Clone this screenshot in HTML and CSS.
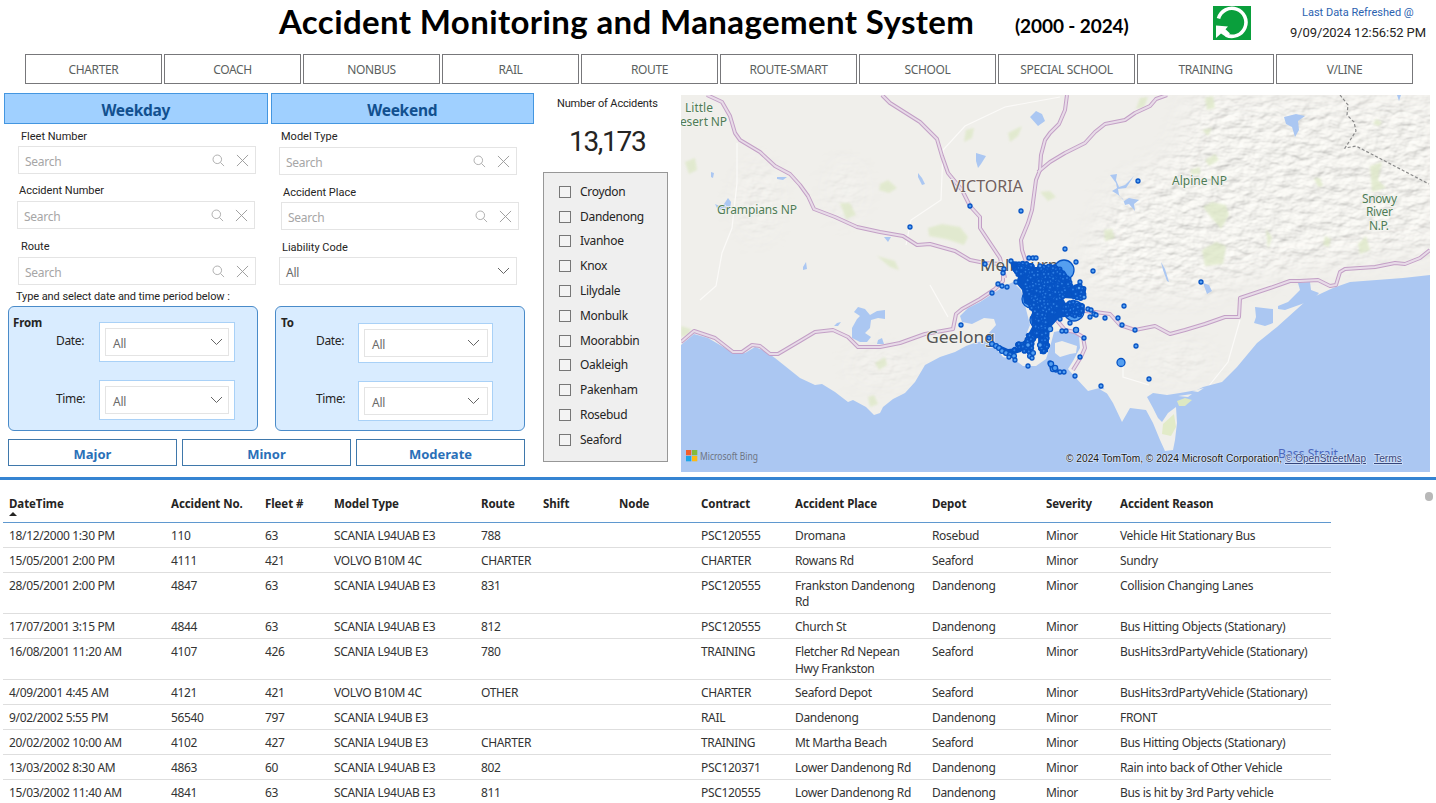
FILE: index.html
```html
<!DOCTYPE html>
<html lang="en">
<head>
<meta charset="utf-8">
<title>Accident Monitoring and Management System</title>
<link rel="stylesheet" href="styles.css">
</head>
<body>
<svg class="defs" width="0" height="0" aria-hidden="true">
  <symbol id="search" viewBox="0 0 14 14"><circle cx="5.7" cy="5.7" r="4.6"/><path d="M9 9l4 4"/></symbol>
  <symbol id="clear" viewBox="0 0 14 14"><path d="M1 1l12 12M13 1L1 13"/></symbol>
  <symbol id="chevron" viewBox="0 0 12 8"><path d="M.5 1L6 6.5 11.500 1"/></symbol>
</svg>
<header class="header">
  <h1 class="title">Accident Monitoring and Management System</h1>
  <span class="years">(2000 - 2024)</span>
  <svg class="refresh" viewBox="0 0 38 34"><rect width="38" height="34" fill="#0a9f3c"/><path d="M5.500 12.500A14 14 0 1 1 13 29" fill="none" stroke="#fff" stroke-width="3.600"/><path d="M3 19.500L15 20.500 12.500 23.200 17 27.500 12.500 30.500 8 27.500 3 32z" fill="#fff"/></svg>
  <div class="refreshed"><span class="refreshed-label">Last Data Refreshed @</span><span class="refreshed-time">9/09/2024 12:56:52 PM</span></div>
</header>
<nav class="tabs">
  <button>CHARTER</button><button>COACH</button><button>NONBUS</button><button>RAIL</button><button>ROUTE</button><button>ROUTE-SMART</button><button>SCHOOL</button><button>SPECIAL SCHOOL</button><button>TRAINING</button><button>V/LINE</button>
</nav>
<main class="body">
  <section class="filters">
    <div class="days"><button>Weekday</button><button>Weekend</button></div>
    <div class="fields">
      <div class="fields-col">
        <div class="field f1"><label>Fleet Number</label><div class="box"><span>Search</span><svg class="ic"><use href="#search"/></svg><svg class="ic x"><use href="#clear"/></svg></div></div>
        <div class="field f2"><label>Accident Number</label><div class="box"><span>Search</span><svg class="ic"><use href="#search"/></svg><svg class="ic x"><use href="#clear"/></svg></div></div>
        <div class="field f3"><label>Route</label><div class="box"><span>Search</span><svg class="ic"><use href="#search"/></svg><svg class="ic x"><use href="#clear"/></svg></div></div>
      </div>
      <div class="fields-col">
        <div class="field g1"><label>Model Type</label><div class="box"><span>Search</span><svg class="ic"><use href="#search"/></svg><svg class="ic x"><use href="#clear"/></svg></div></div>
        <div class="field g2"><label>Accident Place</label><div class="box"><span>Search</span><svg class="ic"><use href="#search"/></svg><svg class="ic x"><use href="#clear"/></svg></div></div>
        <div class="field g3"><label>Liability Code</label><div class="box all"><span>All</span><svg class="chev"><use href="#chevron"/></svg></div></div>
      </div>
    </div>
    <p class="hint">Type and select date and time period below :</p>
    <div class="periods">
      <div class="period from"><b>From</b>
        <div class="prow"><span>Date:</span><div class="sel"><div class="box all"><span>All</span><svg class="chev"><use href="#chevron"/></svg></div></div></div>
        <div class="prow"><span>Time:</span><div class="sel"><div class="box all"><span>All</span><svg class="chev"><use href="#chevron"/></svg></div></div></div>
      </div>
      <div class="period to"><b>To</b>
        <div class="prow"><span>Date:</span><div class="sel"><div class="box all"><span>All</span><svg class="chev"><use href="#chevron"/></svg></div></div></div>
        <div class="prow"><span>Time:</span><div class="sel"><div class="box all"><span>All</span><svg class="chev"><use href="#chevron"/></svg></div></div></div>
      </div>
    </div>
    <div class="severity"><button>Major</button><button>Minor</button><button>Moderate</button></div>
  </section>
  <section class="summary">
    <div class="kpi-label">Number of Accidents</div>
    <div class="kpi">13,173</div>
    <ul class="depots">
      <li><i></i>Croydon</li><li><i></i>Dandenong</li><li><i></i>Ivanhoe</li><li><i></i>Knox</li><li><i></i>Lilydale</li><li><i></i>Monbulk</li><li><i></i>Moorabbin</li><li><i></i>Oakleigh</li><li><i></i>Pakenham</li><li><i></i>Rosebud</li><li><i></i>Seaford</li>
    </ul>
  </section>
  <svg class="map" viewBox="681 95 749 377">
    <defs>
      <filter id="relief" x="0" y="0" width="1" height="1">
        <feTurbulence type="fractalNoise" baseFrequency="0.065 0.11" numOctaves="3" seed="8"/>
        <feDiffuseLighting surfaceScale="2.100" diffuseConstant="1.160" lighting-color="#f2f1ed"><feDistantLight azimuth="235" elevation="60"/></feDiffuseLighting>
      </filter>
      <filter id="soft"><feGaussianBlur stdDeviation="14"/></filter>
      <filter id="edge"><feGaussianBlur stdDeviation="1.300"/></filter>
      <mask id="hills">
        <g fill="#fff" filter="url(#soft)">
          <path d="M1195 95H1450V245L1330 262 1250 275 1190 295 1100 290 1088 262 1110 200 1180 150z" opacity=".8"/>
          <ellipse cx="1180" cy="362" rx="34" ry="12" opacity=".5"/>
          <ellipse cx="884" cy="367" rx="34" ry="12" opacity=".5"/>
          <ellipse cx="757" cy="200" rx="16" ry="36" opacity=".5"/>
          <ellipse cx="846" cy="190" rx="14" ry="28" opacity=".4"/>
        </g>
      </mask>
    </defs>
    <rect x="681" y="95" width="749" height="377" fill="#f0efeb"/>
    <rect x="681" y="95" width="749" height="377" filter="url(#relief)" mask="url(#hills)"/>
    <g class="park" filter="url(#edge)">
      <path d="M685 162l10-4 2 12-8 4zM880 184l8-4 9 8-8 5-10-3zM840 203l10 0 6 12-10 4zM928 228l14-4 18 3 8 10-4 8-18-6-17-3zM966 130l8-2-2 10-8 4zM1008 133l14-7-4 10-8 6zM877 256l18 5 4 9-9-3zM1040 192l10-1 6 6-8 4zM1205 98l8-2 2 12-8 2zM1205 160l10-6 4 6-10 6zM1190 170l10-3 0 7-8 1zM1202 130l10-2-4 8zM1212 202l14 3 3 10-8 14-10-12-8-10zM1202 250l14-8 10 4-3 18-18 2zM1104 230l8-1 3 9-10 3zM1314 178l6 0 3 8-5 1zM1370 166l12-4-4 18 8 8-14 4zM1358 244l8-8 4 14-10 4zM1325 236l6 3-2 8-6-2zM1140 98l8-1-4 10-8 2zM875 363l10-6 2 8-8 5zM868 397l6-2 4 9-8 3zM681 326l10 3-2 6-8 2zM1266 229l6 8-4 12zM1376 119l6 3-3 4-6-2z"/>
    </g>
    <g class="minor">
      <path d="M737 143l0 40-5 45-10 25-6 33-16 14M1060 97l-55 10-40 19-22 24-2 50-30 20-5 25M1240 320l-12 42-20 25M1123 365l0 12 26 8M930 285l18 32"/>
    </g>
    <g class="water">
      <path d="M681 345L694 334 708 338 720 345 735 354 745 353 755 347 765 351 775 358 800 378 815 385 822 384 835 392 848 402 853 400 866 407 874 415 880 413 883 407 893 399 905 393 915 382 925 365 940 357 955 352 966 346 977 342 988 341 988 334 996 325 994 319 984 318 972 324 962 322 960 316 968 308 980 302 1003 287 1013 282 1021 290 1025 305 1030 325 1022 345 1008 352 1000 350 995 347 1003 357 1015 360 1023 366 1036 366 1046 359 1050 347 1054 332 1068 329 1079 336 1080 348 1073 361 1068 369 1075 377 1088 391 1103 387 1113 403 1122 422 1130 408 1146 410 1153 423 1160 440 1165 451 1173 450 1175 440 1177 423 1176 407 1168 413 1162 422 1158 418 1153 408 1147 397 1153 393 1167 395 1180 393 1197 390 1203 387 1222 382 1237 367 1257 343 1277 327 1307 300 1333 288 1350 282 1403 278 1430 275V472H681z"/>
      <path d="M858 307l7 2 5 6 7-4 8-1v9l-7-1-7 2-1 8-5 5 6 4-4 5-7 0-8-4 0-10 5-9 3-3-6-4zM878 340l4-2 2 6-7 0zM834 326l3-3 4-1-3 4zM1255 307l18 2 0 14-8 3-11-3 2-6zM1278 306l10-4 12-12-2-7 12-1 1 8 8 3-6 7-28 10-7-1zM1030 117l6-6 6 3 3 7-7 5zM976 153l10 3-5 8-3 4-2-7zM918 173l4 5 3 6-3 1-4-8zM777 177l10 0-4 3-6-1zM884 237l7 0-3 5zM803 267l3-5 1 7-4 1zM711 172l3 1-1 5-2-1zM715 204l7 3 6-9 3 4-1 7-7 2-6-3zM1284 117l12-3 9 2-7 5 1 9-4 7-3-10-6-3zM1110 175l7-1-1 6 3 7 6-2 9-9-8 12-8 1 1 6 5 6 5-3 10 2-5 4 1 7-6-7-4 1-2-6-6-5-5-3 5-3-1-5zM1161 262l4 7 4 13-2-1-4-11zM1203 283l6 2 3 6-5 3zM1397 95l4 0-2 6z"/>
    </g>
    <g fill="#f0efeb"><path d="M1055 343l7-2 15 5-1 7-6 1-10 3-5-4zM1022 365l10-2-4 4zM1100 389q10-1 12 8l-4-3-7-4z"/><path d="M1177 401l8-3 7 2-7 6-6 0z" fill="#dde8c2"/><path d="M1178 396l14-2-4 3zM1192 391l12-3-6 4z"/></g>
    <path d="M1163 424l11-10 2 13-5 9-9-2z" fill="#e2ebc8"/>
    <g id="roads"></g>
    <path class="border" d="M1340 95l8 10-1 10 7 7 2 9-9 14-2 3 11-2 73 38"/>
    <g class="place">
      <g class="np"><text x="685" y="112" textLength="28">Little</text><text x="680" y="126" textLength="47">esert NP</text><text x="717" y="214" textLength="80">Grampians NP</text><text x="1172" y="185" textLength="55">Alpine NP</text><text x="1362" y="203" textLength="35">Snowy</text><text x="1366" y="216" textLength="27">River</text><text x="1369" y="230" textLength="20">N.P.</text></g>
      <text class="state" x="951" y="192" textLength="72" lengthAdjust="spacingAndGlyphs">VICTORIA</text>
      <text class="city" x="980" y="271" textLength="88" lengthAdjust="spacingAndGlyphs">Melbourne</text>
      <text class="city" x="926" y="343" textLength="69" lengthAdjust="spacingAndGlyphs">Geelong</text>
      <text class="strait" x="1278" y="458" textLength="60" lengthAdjust="spacingAndGlyphs">Bass Strait</text>
    </g>
    <g id="dots"></g>
    <g><path fill="#f25f2c" d="M686 450h5.300v5.300H686z"/><path fill="#84bb3d" d="M692 450h5.300v5.300H692z"/><path fill="#1da6e8" d="M686 456h5.300v5.300H686z"/><path fill="#fcb913" d="M692 456h5.300v5.300H692z"/></g>
    <text class="bing" x="700" y="460" textLength="58" lengthAdjust="spacingAndGlyphs">Microsoft Bing</text>
    <g class="credit"><text x="1066" y="462" textLength="216" lengthAdjust="spacingAndGlyphs">© 2024 TomTom, © 2024 Microsoft Corporation,</text><text class="link" x="1285" y="462" textLength="81" lengthAdjust="spacingAndGlyphs">© OpenStreetMap</text><text class="link" x="1374" y="462" textLength="28" lengthAdjust="spacingAndGlyphs">Terms</text></g>
  </svg>
</main>
<section class="report">
  <div class="table" id="table"></div>
  <div class="scroll"><i></i></div>
</section>
<script src="app.js"></script>
</body>
</html>
```
FILE: styles.css
```css
* { box-sizing: border-box; }
body { margin: 0; width: 1436px; height: 803px; overflow: hidden; background: #fff; font-family: "Noto Sans", "Open Sans", sans-serif; font-size: 12px; color: #252423; }
button { font: inherit; padding: 0; margin: 0; background: #fff; border-radius: 0; }
.defs { display: block; height: 0; }

.header { display: flex; height: 54px; padding-left: 279px; }
.title { margin: 0; width: 736px; font: 700 33px/42px Lato, sans-serif; letter-spacing: 0.38px; color: #000; white-space: nowrap; }
.years { width: 198px; font: 700 19px/51px Lato, sans-serif; letter-spacing: -0.1px; color: #000; white-space: nowrap; }
.refresh { width: 38px; height: 34px; margin-top: 6px; }
.refreshed { display: flex; flex-direction: column; width: 176px; padding-top: 5px; padding-left: 37px; font-family: Roboto, sans-serif; white-space: nowrap; }
.refreshed-label { padding-left: 14px; font-size: 11px; line-height: 15px; letter-spacing: 0; color: #2b62b0; }
.refreshed-time { padding-left: 2px; font-size: 13px; line-height: 25px; letter-spacing: -0.1px; }

.tabs { display: grid; grid-template-columns: repeat(10, 1fr); gap: 2px; width: 1413px; height: 30px; padding-left: 25px; }
.tabs button { height: 30px; padding-top: 1px; border: 1.500px solid #77777a; font-size: 12px; letter-spacing: -0.35px; color: #5b5f60; }

.body { display: flex; height: 388px; padding-top: 9px; }
.filters { width: 543px; }
.days { display: flex; gap: 3px; margin-left: 4px; }
.days button { width: 263.500px; height: 31px; padding-top: 3px; border: 1px solid #4496e0; background: #a0d0ff; font-size: 15.500px; font-weight: 700; color: #12508f; letter-spacing: -0.3px; }
.fields { display: flex; height: 164px; }
.fields-col { width: 262px; padding-top: 4px; }
.field label { display: block; height: 18px; padding-left: 3px; font: 11px/18px Roboto, sans-serif; letter-spacing: 0; }
.f1 { margin-left: 18px; }
.f2 { margin: 8px 0 0 17px; }
.field.f2 label { padding-left: 2px; height: 19px; }
.f3 { margin: 9px 0 0 18px; }
.field.f3 label { height: 19px; }
.g1 { margin-left: 17px; }
.field.g1 label { height: 19px; padding-left: 2px; }
.g2 { margin: 9px 0 0 19px; }
.field.g2 label { padding-left: 2px; }
.g3 { margin: 9px 0 0 17px; }
.box { display: flex; align-items: center; width: 238px; height: 28px; padding: 0 6px; border: 1px solid #e4e4e4; background: #fff; font-size: 12px; letter-spacing: -0.25px; color: #a6a6a6; }
.box span { flex: 1; padding-top: 4px; line-height: 20px; }
.box.all { color: #6b6b6b; }
.ic { width: 13px; height: 13px; fill: none; stroke: #aaa; stroke-width: 1; }
.ic.x { margin-left: 11px; stroke: #999; }
.chev { width: 13px; height: 8px; fill: none; stroke: #666; stroke-width: 1; }
.hint { height: 18px; margin: 0; padding-left: 16px; font: 11px/18px Roboto, sans-serif; letter-spacing: -0.08px; }
.periods { display: flex; gap: 17px; padding-left: 8px; }
.period { width: 250px; height: 125px; padding: 9px 0 0 4px; border: 1px solid #4a8bc9; border-radius: 6px; background: #d9ecff; }
.period b { display: block; height: 6px; font-size: 11.500px; line-height: 14px; letter-spacing: -0.1px; }
.prow { display: flex; height: 58px; padding-left: 43px; }
.prow > span { width: 43px; padding-top: 9px; line-height: 20px; letter-spacing: -0.35px; }
.sel { width: 136px; height: 40px; padding: 5px; border: 1px solid #a9d1f7; background: #fff; }
.sel .box { width: 124px; height: 28px; padding: 0 5px 0 7px; }
.to { padding-left: 5px; }
.to .prow { padding-left: 35px; }
.to .prow > span { width: 42px; }
.to .sel { width: 135px; height: 40px; margin-top: 1px; }
.to .sel .box { padding-right: 7px; }
.severity { display: flex; gap: 5px; padding: 8px 0 0 8px; }
.severity button { width: 169px; height: 27px; padding-top: 3px; border: 1.500px solid #3f78ab; color: #2a70b8; font-size: 13px; font-weight: 700; }

.summary { width: 138px; }
.kpi-label { padding: 3px 0 0 14px; font: 11px/16px Roboto, sans-serif; letter-spacing: -0.15px; white-space: nowrap; }
.kpi { height: 60px; padding: 15px 0 0 26px; font: 28px/30px Roboto, sans-serif; letter-spacing: -1.300px; }
.depots { width: 125px; height: 290px; margin: 0; padding: 6px 0 0 14px; list-style: none; border: 1px solid #979797; background: #efefef; letter-spacing: -0.3px; }
.depots li { display: flex; align-items: center; height: 24.800px; }
.depots i { width: 12px; height: 12px; margin: 1px 9px 0 1px; border: 1px solid #777; background: #f3f3f3; }

.map { width: 749px; height: 377px; margin-top: 2px; font-family: "Noto Sans", sans-serif; }
.park { fill: #dde8c6; opacity: .75; }
.minor { fill: none; stroke: #fbfaf8; stroke-width: 1.200; }
.water { fill: #abc7f2; }
.road-case { fill: none; stroke: #c3a0c6; stroke-width: 4; stroke-linejoin: round; }
.road-core { fill: none; stroke: #e8dbe8; stroke-width: 2; stroke-linejoin: round; }
.border { fill: none; stroke: #888; stroke-width: 1.200; stroke-dasharray: 3 2; }
.place text { paint-order: stroke; stroke: #f4f4f0; stroke-width: 1.500; }
.place .np { font-size: 12px; fill: #4f7c56; }
.place .state { font-size: 15.500px; fill: #71605e; }
.place .city { font-size: 17px; fill: #555; }
.place .strait { font-size: 13px; fill: #4a66bd; stroke: none; }
.bing { font-size: 10px; fill: #6d7482; }
.credit { font: 10px "Liberation Sans", sans-serif; fill: #151515; paint-order: stroke; stroke: #dce8fb; stroke-width: 1.200; }
.credit .link { fill: #34457c; text-decoration: underline; }
.dot { fill: #559ff0; stroke: #0754c5; stroke-width: 1.300; }
.dot.dense { fill: #2f7fe2; stroke-width: 1.700; }

.report { display: flex; justify-content: space-between; height: 331px; margin-top: 5px; border-top: 3px solid #3584d2; }
.table { width: 1328px; margin-left: 3px; }
.row { display: grid; grid-template-columns: 162px 94px 69px 147px 62px 76px 82px 94px 137px 114px 74px 217px; border-bottom: 1px solid #dedede; padding: 5px 0 2.400px; line-height: 16.500px; letter-spacing: -0.34px; color: #333; }
.row span { padding-left: 6px; }
.row.head { height: 43px; padding: 16px 0 0; border-color: #5f98cf; font-weight: 700; font-size: 11.500px; letter-spacing: -0.08px; color: #252423; }
.sort { display: block; width: 0; border: 4px solid transparent; border-top: 0; border-bottom-color: #252423; margin-top: -1px; }
.scroll { width: 12px; padding-top: 12px; }
.scroll i { display: block; width: 8px; height: 9px; border-radius: 4px; background: #b8b8b8; margin-left: 1px; }
```
FILE: app.js
```js
const SVG = "http://www.w3.org/2000/svg";
function add(parent, tag, attrs) {
  const el = document.createElementNS(SVG, tag);
  for (const k in attrs) el.setAttribute(k, attrs[k]);
  parent.appendChild(el);
}

// Highways: a mauve casing with a pale core.
const roads = [
  "M707 95L722 102 730 116 735 133 740 140 760 152 775 166 790 174 800 185 808 196 814 209 835 217 857 227 880 232 903 236 917 245 930 244 955 251 970 260 985 263 1000 264",
  "M882 95L890 103 920 122 937 139 942 156 948 173 962 190 970 206 980 217 980 228 1000 258 1005 278",
  "M1067 95L1065 110 1059 124 1050 133 1045 140 1041 155 1040 170 1036 180 1032 210 1028 223 1021 240 1022 250 1026 262",
  "M1167 95L1156 99 1150 106 1135 113 1125 120 1105 124 1095 132 1085 143 1065 153 1050 162 1038 172",
  "M1430 250L1420 258 1405 264 1395 263 1375 267 1345 269 1340 272 1336 285 1330 286 1318 280 1300 281 1290 281 1270 288 1240 298 1239 317 1225 317 1205 324 1185 330 1170 334 1155 326 1135 330 1120 325 1110 314 1095 312 1075 310",
  "M681 342L694 331 715 338 733 352 742 352 752 345 760 346 770 354 778 354 800 341 815 332 833 330 848 337 858 347 880 347 900 343 925 334 953 329 956 314 962 309 980 299 995 289 1003 281 1003 272",
  "M1055 318L1065 330 1075 332 1083 337 1085 348 1081 357 1073 370"
];
const layer = document.getElementById("roads");
roads.forEach(d => add(layer, "path", { d, class: "road-case" }));
roads.forEach(d => add(layer, "path", { d, class: "road-core" }));

const dots = document.getElementById("dots");
const dot = (x, y, r = 2, cls = "dot") => add(dots, "circle", { cx: x, cy: y, r, class: cls });
let seed = 7;
const rnd = () => (seed = (seed * 16807) % 2147483647) / 2147483647;

// Large bubbles and the solid metropolitan core.
[[1064,270,10],[1074,311,10],[1031,299,9],[1038,320,8]].forEach(p => dot(...p));
add(dots, "path", { fill: "#0754c5", d: "M1010 261L1023 262 1032 267 1045 267 1055 264 1066 274 1074 286 1084 297 1078 299 1063 298 1067 306 1080 311 1070 316 1059 318 1050 328 1048 352 1040 354 1038 338 1030 341 1021 352 1008 356 992 344 999 345 1008 349 1018 348 1026 338 1032 327 1031 317 1033 308 1024 303 1022 290 1016 283 1018 277 1012 270z" });
function scatter(n, cx, cy, rx, ry) {
  for (let i = 0; i < n; i++) {
    const a = rnd() * Math.PI * 2, d = Math.sqrt(rnd());
    dot(cx + Math.cos(a) * d * rx, cy + Math.sin(a) * d * ry, 1.8, "dot dense");
  }
}
scatter(50, 1024, 270, 10, 7);
scatter(210, 1047, 284, 23, 18);
scatter(70, 1044, 305, 14, 14);
scatter(40, 1074, 309, 11, 7);
scatter(30, 1078, 292, 7, 7);
scatter(45, 1040, 326, 7, 13);
scatter(40, 1044, 343, 4, 11);
scatter(24, 1023, 348, 10, 5);
scatter(12, 1031, 338, 4, 6);
[[992,344],[996,346],[999,348],[1002,351],[1006,353],[1010,355],[1014,356],[1030,356],[1033,353],[1028,345],[1040,345]].forEach(p => dot(p[0], p[1], 2.4));

[[910,227],[970,206],[1021,211],[1138,181],[985,264],[1065,249],[1076,262],[1093,271],[1201,282],[1011,261],[1004,269],[1003,273],[998,284],[1002,286],[1007,287],[992,293],[1016,282],[1029,258],[1033,258],[1036,258],[1040,266],[1080,282],[1079,288],[1084,297],[1124,306],[1105,318],[1118,318],[1122,325],[1135,330],[1136,346],[1149,379],[1101,386],[1075,376],[1084,338],[1080,357],[1076,330],[1066,331],[1062,331],[961,325],[989,338],[1060,319],[1070,323],[1088,309],[1091,310],[1094,314],[1090,317],[1096,315],[1050,363],[1052,367],[1056,370],[1060,372],[1064,372],[1028,366],[1015,360],[1009,357],[1032,358]].forEach(p => dot(...p));
[[1076,330],[1051,364],[1053,369],[1055,368],[1050,329]].forEach(p => dot(p[0], p[1], 2.6));
dot(1121, 362.5, 4);

const rows = [
  ["18/12/2000 1:30 PM","110","63","SCANIA L94UAB E3","788","","","PSC120555","Dromana","Rosebud","Minor","Vehicle Hit Stationary Bus"],
  ["15/05/2001 2:00 PM","4111","421","VOLVO B10M 4C","CHARTER","","","CHARTER","Rowans Rd","Seaford","Minor","Sundry"],
  ["28/05/2001 2:00 PM","4847","63","SCANIA L94UAB E3","831","","","PSC120555","Frankston Dandenong\nRd","Dandenong","Minor","Collision Changing Lanes"],
  ["17/07/2001 3:15 PM","4844","63","SCANIA L94UAB E3","812","","","PSC120555","Church St","Dandenong","Minor","Bus Hitting Objects (Stationary)"],
  ["16/08/2001 11:20 AM","4107","426","SCANIA L94UB E3","780","","","TRAINING","Fletcher Rd Nepean\nHwy Frankston","Seaford","Minor","BusHits3rdPartyVehicle (Stationary)"],
  ["4/09/2001 4:45 AM","4121","421","VOLVO B10M 4C","OTHER","","","CHARTER","Seaford Depot","Seaford","Minor","BusHits3rdPartyVehicle (Stationary)"],
  ["9/02/2002 5:55 PM","56540","797","SCANIA L94UB E3","","","","RAIL","Dandenong","Dandenong","Minor","FRONT"],
  ["20/02/2002 10:00 AM","4102","427","SCANIA L94UB E3","CHARTER","","","TRAINING","Mt Martha Beach","Seaford","Minor","Bus Hitting Objects (Stationary)"],
  ["13/03/2002 8:30 AM","4863","60","SCANIA L94UAB E3","802","","","PSC120371","Lower Dandenong Rd","Dandenong","Minor","Rain into back of Other Vehicle"],
  ["15/03/2002 11:40 AM","4841","63","SCANIA L94UAB E3","811","","","PSC120555","Lower Dandenong Rd","Dandenong","Minor","Bus is hit by 3rd Party vehicle"]
];
const head = ["DateTime","Accident No.","Fleet #","Model Type","Route","Shift","Node","Contract","Accident Place","Depot","Severity","Accident Reason"];
const cells = r => r.map(c => `<span>${c.replace("\n", "<br>")}</span>`).join("");
document.getElementById("table").innerHTML =
  `<div class="row head">${cells(head).replace("DateTime", 'DateTime<i class="sort"></i>')}</div>` +
  rows.map(r => `<div class="row">${cells(r)}</div>`).join("");
```
